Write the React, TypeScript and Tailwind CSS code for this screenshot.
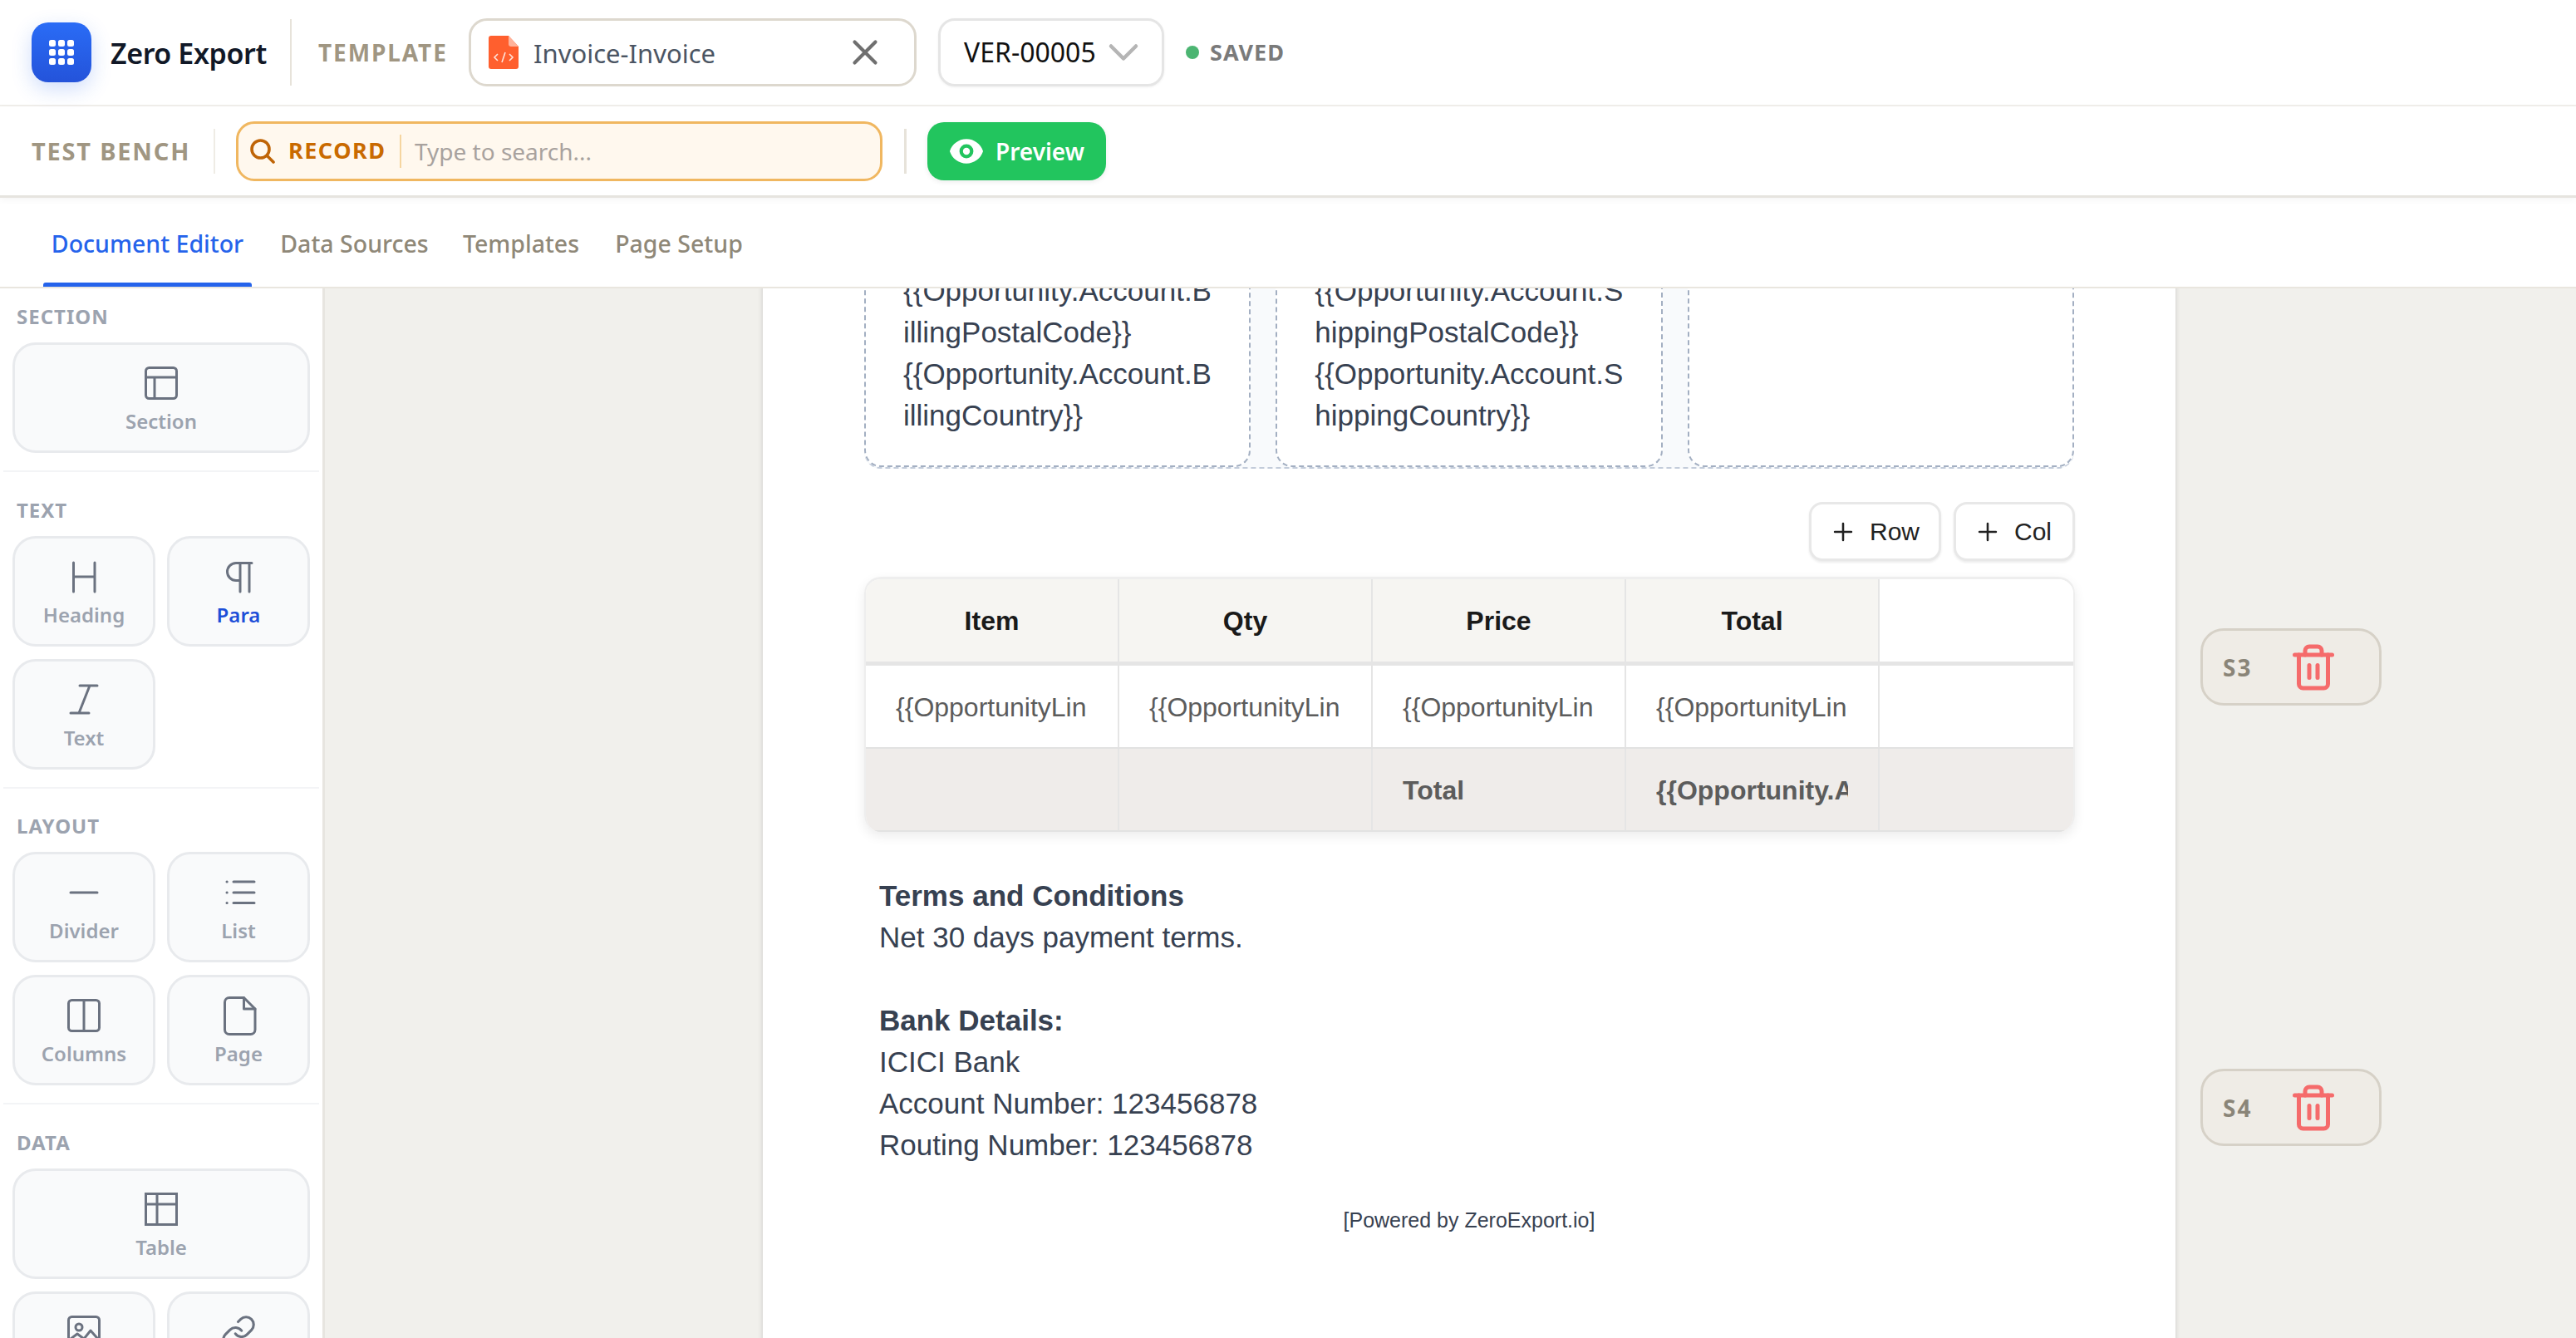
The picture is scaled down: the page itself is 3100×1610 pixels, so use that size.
import React from "react";
import { X, ChevronDown, Plus, Trash2, Link } from "lucide-react";
import { HiEye } from "react-icons/hi";

const ui = "font-['Noto_Sans',sans-serif]";
const doc = "font-['Liberation_Sans',Arial,sans-serif]";

const ic = "overflow-visible text-[#6b7280] fill-none stroke-current stroke-[3px]";
const I = ({ children }: { children: React.ReactNode }) => (
  <svg width="40" height="40" viewBox="0 0 40 40" className={ic} strokeLinecap="round" strokeLinejoin="round">
    {children}
  </svg>
);

const icons: Record<string, React.ReactNode> = {
  Section: (
    <I>
      <rect x="1.5" y="1.5" width="37" height="37" rx="4" />
      <path d="M1.5 13H38.5M12 13V38.5" />
    </I>
  ),
  Heading: (
    <I>
      <path d="M7.5 3V38M33 3V38M7.5 20H33" />
    </I>
  ),
  Para: (
    <I>
      <path d="M36 3.5H17a10.5 10.5 0 0 0 0 21h5M22 3.5V38M33 3.5V38" />
    </I>
  ),
  Text: (
    <I>
      <path d="M15 3H36M4 36H26M27 3L14 36" />
    </I>
  ),
  Divider: (
    <I>
      <path d="M4 20H36" />
    </I>
  ),
  List: (
    <I>
      <path d="M14 7H39M14 20H39M14 32.5H39M6 7H6.2M6 20H6.2M6 32.5H6.2" />
    </I>
  ),
  Columns: (
    <I>
      <rect x="1.5" y="1.5" width="37" height="37" rx="4" />
      <path d="M20 1.5V38.5" />
    </I>
  ),
  Page: (
    <I>
      <path d="M9 -1.5h17.5L40 12v25a5.5 5.5 0 0 1-5.5 5.5H9A5.5 5.5 0 0 1 3.5 37V4A5.5 5.5 0 0 1 9-1.5z" />
      <path d="M26.5-1.5V12H40" />
    </I>
  ),
  Table: (
    <I>
      <rect x="1.5" y="1.5" width="37" height="37" strokeLinejoin="miter" />
      <path d="M1.5 14H38.5M15 1.5V38.5" strokeLinecap="butt" />
    </I>
  ),
  Image: (
    <I>
      <rect x="1.5" y="1.5" width="37" height="37" rx="4" />
      <circle cx="14" cy="14" r="4" />
      <path d="M1.5 30L12 22l8 6 8-10 10.5 12" />
    </I>
  ),
  Link: <Link size={44} strokeWidth={1.7} className="text-[#6b7280] -mx-[2px] -mt-[2px]" />,
};

function Card({ name, blue }: { name: string; blue?: boolean }) {
  return (
    <div className="h-[133px] rounded-[28px] border-[3px] border-[#e8eaed] bg-[#f9fafb] flex flex-col items-center pt-[26px]">
      <div className="h-[40px]">{icons[name]}</div>
      <div className={`mt-[10px] text-[24px] leading-[32px] font-semibold ${blue ? "text-[#1d4ed8]" : "text-[#9ca3af]"}`}>{name}</div>
    </div>
  );
}

function Group({ title, rows, top }: { title: string; rows: (string[])[]; top: string }) {
  return (
    <div>
      <div className={`${top} ml-[20px] text-[24px] leading-[32px] font-bold tracking-[1px] text-[#9ca3af] mb-[15px]`}>{title}</div>
      <div className="px-[15px] flex flex-col gap-[15px]">
        {rows.map((r, i) => (
          <div key={i} className={r.length === 1 && title !== "TEXT" ? "" : "grid grid-cols-2 gap-x-[14px]"}>
            {r.map((n) => (
              <Card key={n} name={n} blue={n === "Para"} />
            ))}
          </div>
        ))}
      </div>
      <div className="mt-[21px] mx-[4px] h-[2px] bg-[#f3f4f6]" />
    </div>
  );
}

function Sidebar() {
  return (
    <aside className={`${ui} w-[391px] shrink-0 border-r-[3px] border-[#e7e5e0] bg-white overflow-hidden`}>
      <Group top="mt-[18px]" title="SECTION" rows={[["Section"]]} />
      <Group top="mt-[30px]" title="TEXT" rows={[["Heading", "Para"], ["Text"]]} />
      <Group top="mt-[29px]" title="LAYOUT" rows={[["Divider", "List"], ["Columns", "Page"]]} />
      <Group top="mt-[30px]" title="DATA" rows={[["Table"], ["Image", "Link"]]} />
    </aside>
  );
}

function Col({ children }: { children?: React.ReactNode }) {
  return (
    <div className="bg-white border-2 border-t-0 border-dashed border-[#a3afc2] rounded-b-[20px] pl-[45px] pr-[41px] pb-[35px] break-all text-[35px] leading-[50px] text-[#374151]">
      {children}
    </div>
  );
}

const colsTpl = "grid grid-cols-[305px_305px_305px_305px_1fr]";
const cell = "border-r-2 border-[#e5e5e5] flex items-center overflow-hidden whitespace-nowrap";

function DocTable() {
  return (
    <div className="mt-[19px] w-[1457px] rounded-[20px] border-x-2 border-t-[3px] border-[#eeeeee] overflow-hidden shadow-[0_5px_14px_rgba(0,0,0,0.08)]">
      <div className={`${colsTpl} h-[104px] border-b-[5px] border-[#e5e5e5] text-[32px] font-bold text-[#1a1a1a]`}>
        {["Item", "Qty", "Price", "Total"].map((h) => (
          <div key={h} className={`${cell} justify-center bg-[#f6f5f2]`}>
            {h}
          </div>
        ))}
        <div className="bg-white" />
      </div>
      <div className={`${colsTpl} h-[100px] border-b-2 border-[#e2e2e2] text-[32px] text-[#5c5c5c]`}>
        {[0, 1, 2, 3].map((i) => (
          <div key={i} className={`${cell} pl-[36px] pr-[37px] pt-[2px]`}>
            <span className="block overflow-hidden">{"{{OpportunityLineItem.Name}}"}</span>
          </div>
        ))}
        <div />
      </div>
      <div className={`${colsTpl} h-[100px] border-b-2 border-[#e2e2e2] bg-[#efecea] text-[32px] font-bold text-[#5c5c5c]`}>
        <div className={cell} />
        <div className={cell} />
        <div className={`${cell} px-[36px] pt-[2px]`}>Total</div>
        <div className={`${cell} px-[36px] pt-[2px]`}>
          <span className="block overflow-hidden">{"{{Opportunity.Amount}}"}</span>
        </div>
        <div />
      </div>
    </div>
  );
}

function Paper() {
  return (
    <div className={`${doc} ml-[527px] w-[1700px] min-h-[1400px] bg-white px-[122px] shadow-[0_0_6px_rgba(0,0,0,0.16)]`}>
      <div className="mt-[-22px] grid grid-cols-3 gap-x-[30px] bg-[#f8fafc] rounded-b-[20px] border-b-2 border-dashed border-[#c3ccda]">
        <Col>
          {"{{Opportunity.Account.BillingPostalCode}}"}
          <br />
          {"{{Opportunity.Account.BillingCountry}}"}
        </Col>
        <Col>
          {"{{Opportunity.Account.ShippingPostalCode}}"}
          <br />
          {"{{Opportunity.Account.ShippingCountry}}"}
        </Col>
        <Col />
      </div>
      <div className="mt-[40px] w-[1457px] flex justify-end gap-[15px]">
        {["Row", "Col"].map((t) => (
          <div key={t} className={`${t === "Row" ? "w-[159px]" : "w-[146px]"} h-[71px] rounded-[16px] border-[3px] border-[#e8e8e8] shadow-[0_2px_3px_rgba(0,0,0,0.08)] bg-white flex items-center pl-[21px] gap-[15px] text-[30px] text-[#222222]`}>
            <Plus size={34} strokeWidth={1.8} className="text-[#222222]" />
            {t}
          </div>
        ))}
      </div>
      <DocTable />
      <div className="mt-[52px] pl-[18px] text-[35px] leading-[50px] text-[#374151]">
        <div className="font-bold">Terms and Conditions</div>
        <div>Net 30 days payment terms.</div>
        <div className="h-[50px]" />
        <div className="font-bold">Bank Details:</div>
        <div>ICICI Bank</div>
        <div>Account Number: 123456878</div>
        <div>Routing Number: 123456878</div>
      </div>
      <div className="mt-[46px] text-center text-[25px] leading-[38px] text-[#374151]">[Powered by ZeroExport.io]</div>
    </div>
  );
}

function Handle({ label, top }: { label: string; top: string }) {
  return (
    <div className={`${ui} absolute left-[2257px] ${top} w-[218px] h-[93px] rounded-[28px] border-[3px] border-[#d6d1c7] bg-[#efece6] flex items-center pl-[24px]`}>
      <span className="w-[82px] text-[28px] font-bold tracking-[2px] text-[#8a8578]">{label}</span>
      <Trash2 size={60} strokeWidth={2} className="text-[#f56b6b] -ml-[3px]" />
    </div>
  );
}

const tabs = [
  { t: "Document Editor", w: "w-[251px]", m: "" },
  { t: "Data Sources", w: "w-[201px]", m: "ml-[23px]" },
  { t: "Templates", w: "w-[160px]", m: "ml-[20px]" },
  { t: "Page Setup", w: "w-[176px]", m: "ml-[22px]" },
];

export default function App() {
  return (
    <div className={`${ui} w-[3100px] h-[1610px] overflow-hidden flex flex-col bg-white`}>
      {/* Top bar */}
      <div className="h-[128px] shrink-0 border-b-2 border-[#f0eeea] flex items-center pl-[38px]">
        <div className="w-[72px] h-[72px] rounded-[20px] bg-gradient-to-b from-[#2a6cf6] to-[#2453da] shadow-[0_8px_24px_rgba(37,99,235,0.22)] grid grid-cols-3 gap-[3px] p-[21px] place-items-center">
          {Array.from({ length: 9 }).map((_, i) => (
            <span key={i} className="w-[8px] h-[8px] rounded-[2.5px] bg-white" />
          ))}
        </div>
        <div className="ml-[23px] mt-[2px] w-[188px] whitespace-nowrap text-[34px] font-semibold tracking-[-0.4px] text-[#111827]">Zero Export</div>
        <div className="ml-[28px] w-[2px] h-[80px] bg-[#e7e3da]" />
        <div className="ml-[32px] w-[155px] whitespace-nowrap text-[28px] font-bold tracking-[1.9px] text-[#a09682]">TEMPLATE</div>
        <div className="ml-[26px] w-[539px] h-[82px] rounded-[22px] border-[3px] border-[#ddd8ce] flex items-center pl-[21px]">
          <svg width="36" height="40" viewBox="0 0 36 40">
            <path d="M3 0H24L36 13V37a3 3 0 0 1-3 3H3a3 3 0 0 1-3-3V3a3 3 0 0 1 3-3z" fill="#ff5f2e" />
            <path d="M24 0L36 13H27a3 3 0 0 1-3-3z" fill="#ffb39b" />
            <path d="M11 22l-4 4 4 4M25 22l4 4-4 4M20 20l-4 12" fill="none" stroke="#ffe3d9" strokeWidth="1.6" />
          </svg>
          <span className="ml-[18px] mt-[2px] text-[31px] text-[#4b5563]">Invoice-Invoice</span>
          <X size={50} strokeWidth={2} className="ml-auto mr-[34px] text-[#6f6f6f]" />
        </div>
        <div className="ml-[26px] w-[272px] h-[82px] rounded-[20px] border-[3px] border-[#e5e5e5] shadow-[0_1px_3px_rgba(0,0,0,0.06)] flex items-center pl-[28px] text-[32px] text-[#111111]">
          <span className="w-[162px] whitespace-nowrap">VER-00005</span>
          <ChevronDown size={60} strokeWidth={1.8} className="text-[#b5b5b5]" />
        </div>
        <span className="ml-[26px] w-[16px] h-[16px] rounded-full bg-[#4cb572]" />
        <span className="ml-[13px] text-[27px] font-bold tracking-[1px] text-[#7a7a7a]">SAVED</span>
      </div>
      {/* Test bench */}
      <div className="h-[110px] shrink-0 border-b-[3px] border-[#e6e4df] shadow-[0_3px_8px_rgba(0,0,0,0.04)] flex items-center pl-[38px]">
        <div className="w-[190px] text-[29px] font-bold tracking-[1.8px] text-[#a09682] whitespace-nowrap">TEST BENCH</div>
        <div className="ml-[29px] w-[2px] h-[54px] bg-[#efece5]" />
        <div className="ml-[25px] w-[778px] h-[72px] rounded-[22px] border-[3px] border-[#f0b760] bg-[#fff8ee] flex items-center pl-[14px]">
          <svg width="30" height="30" viewBox="0 0 30 30" fill="none" stroke="#bf6406" strokeWidth="3.6" strokeLinecap="round">
            <circle cx="12.5" cy="12.5" r="10.5" />
            <path d="M20.5 20.5L28 28" />
          </svg>
          <span className="ml-[16px] w-[116px] whitespace-nowrap text-[27px] font-bold tracking-[1.5px] text-[#c96a00]">RECORD</span>
          <span className="ml-[18px] w-[2px] h-[40px] bg-[#f5d5a0]" />
          <span className="ml-[16px] text-[28px] text-[#a8a29e]">Type to search...</span>
        </div>
        <div className="ml-[26px] w-[3px] h-[54px] bg-[#e7e3da]" />
        <div className="ml-[25px] w-[215px] h-[70px] rounded-[20px] bg-[#22c55e] shadow-[0_2px_6px_rgba(0,0,0,0.08)] flex items-center pl-[26px] text-[28px] font-semibold text-white">
          <HiEye size={42} />
          <span className="ml-[14px]">Preview</span>
        </div>
      </div>
      {/* Tabs */}
      <div className="h-[109px] shrink-0 border-b-2 border-[#e9e6df] flex items-stretch pl-[52px] text-[28.5px] font-medium text-[#8f8878]">
        {tabs.map(({ t, w, m }, i) => (
          <div key={t} className={`relative flex items-center justify-center whitespace-nowrap pt-[3px] ${w} ${m} ${i === 0 ? "text-[#2563eb]" : ""}`}>
            {t}
            {i === 0 && <span className="absolute left-0 right-0 bottom-0 h-[5px] rounded-t-[3px] bg-[#2563eb]" />}
          </div>
        ))}
      </div>
      {/* Body */}
      <div className="flex-1 flex min-h-0">
        <Sidebar />
        <main className="relative flex-1 overflow-hidden bg-[#f1f0ec]">
          <Paper />
          <Handle label="S3" top="top-[409px]" />
          <Handle label="S4" top="top-[939px]" />
        </main>
      </div>
    </div>
  );
}
